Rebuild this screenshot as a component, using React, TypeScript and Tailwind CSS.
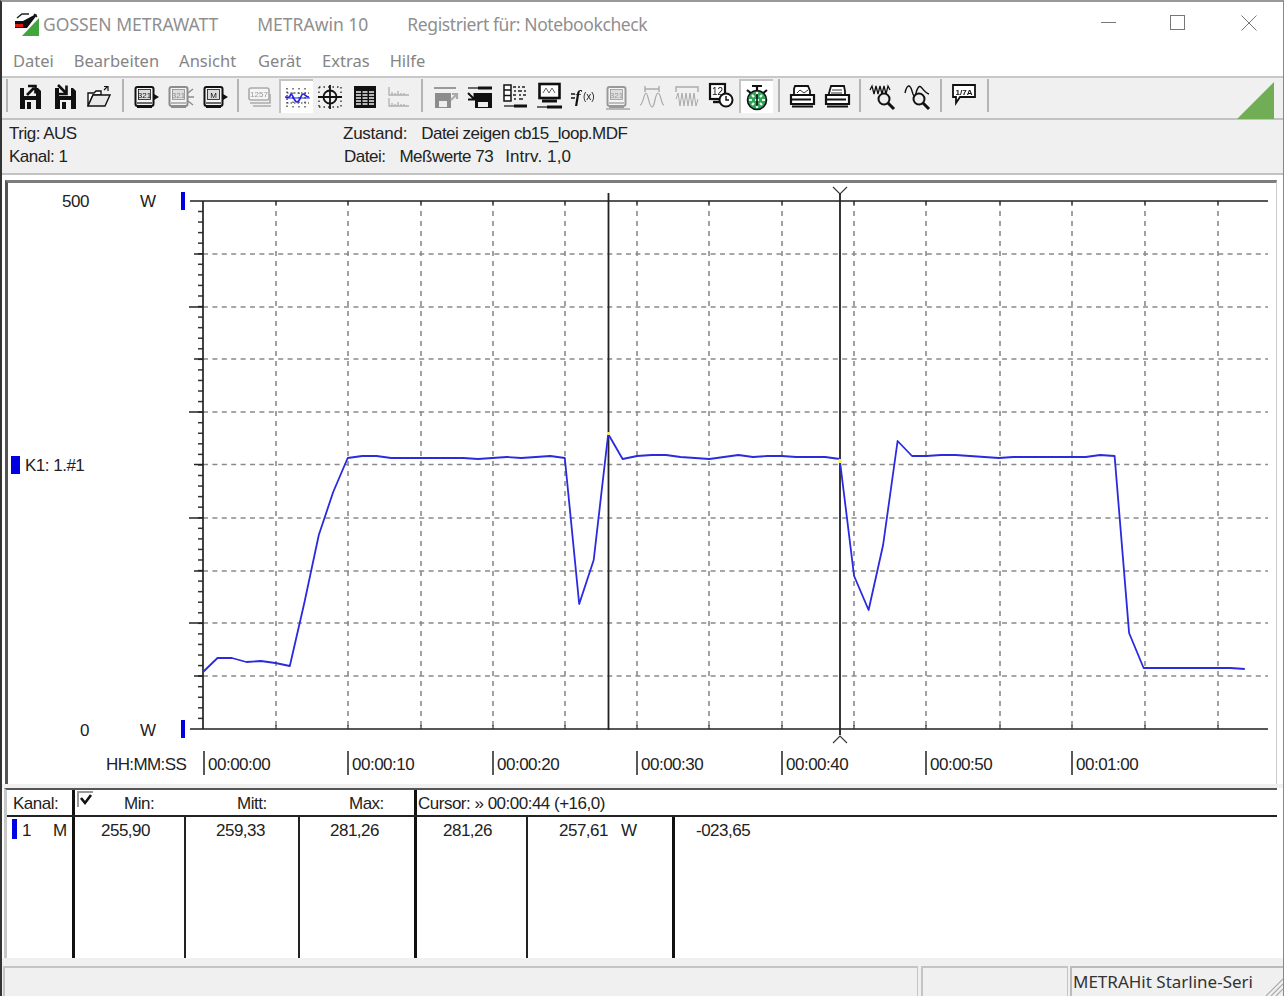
import React from "react"

const ui = "font-['Noto_Sans',sans-serif]"
const old = "font-['Liberation_Sans',sans-serif]"

const samples = [
  672, 658, 658, 662, 661, 663, 666, 603, 535, 492, 458, 456, 456, 458, 458, 458, 458, 458, 458, 459, 458, 457, 458, 457, 456, 458,
  604, 560, 434, 459, 456, 455, 455, 457, 458, 459, 457, 455, 457, 456, 456, 457, 457, 457, 459, 576, 610, 545, 441, 456, 456, 455,
  455, 456, 457, 458, 457, 457, 457, 457, 457, 457, 455, 456, 633, 668, 668, 668, 668, 668, 668, 668, 669,
]

const curve = samples.map((y, i) => `${(203 + 14.47 * i).toFixed(1)},${y}`).join(" ")
const vGrid = [276, 348, 421, 493, 565, 637, 709, 782, 854, 926, 1000, 1072, 1145, 1218]
const hGrid = [254, 307, 359, 412, 464.5, 518, 571, 623, 676]
const timeLabels = [
  [204, "00:00:00"],
  [348, "00:00:10"],
  [493, "00:00:20"],
  [637, "00:00:30"],
  [782, "00:00:40"],
  [926, "00:00:50"],
  [1072, "00:01:00"],
] as const
const yTicks = Array.from({ length: 50 }, (_, i) => 211.5 + i * 10.56).filter((y) => y < 728)

function Sep() {
  return (
    <div className="w-[12.2px] h-[33px] flex justify-center shrink-0">
      <div className="w-[2px] h-full bg-[#b4b4b4]" />
    </div>
  )
}

function Btn({ children, active }: { children: React.ReactNode; active?: boolean }) {
  return (
    <div
      className={
        "w-[34.45px] h-[34px] flex items-center justify-center shrink-0 " +
        (active ? "bg-white border-t-2 border-l-2 border-[#c4c4c4]" : "")
      }
    >
      <svg width="30" height="30" viewBox="0 0 30 30" className="blur-[0.4px]">
        {children}
      </svg>
    </div>
  )
}

const Floppy = ({ c = "#111" }: { c?: string }) => (
  <>
    <path d="M5 7h18l3 3v18H5z" fill={c} />
    <rect x="9" y="7" width="12" height="8" fill="#f0f0f0" />
    <rect x="10" y="19" width="11" height="9" fill="#f0f0f0" />
    <rect x="12" y="21" width="4" height="7" fill={c} />
  </>
)

const Meter = ({ label, c = "#111" }: { label: string; c?: string }) => (
  <>
    <rect x="4.5" y="6" width="18" height="19" rx="2" fill="#f4f4f4" stroke={c} strokeWidth="2" />
    <rect x="7.5" y="8.5" width="12" height="10" fill="#ddd" stroke={c} strokeWidth="0.8" />
    <text x="13.5" y="16.5" textAnchor="middle" fontSize="8" fill={c} className={old}>
      {label}
    </text>
    <path d="M6 22h15" stroke={c} strokeWidth="1.2" />
    <path d="M6 26h15" stroke={c} strokeWidth="2" />
  </>
)

function Toolbar() {
  return (
    <div className="h-[42px] bg-[#f0f0f0] border-b-2 border-[#c2c2c2] flex items-start pt-[1px] ml-[-1px] relative shrink-0">
      <Sep />
      <Btn>
        <Floppy />
        <path d="M12 14l7-7M13 5h7.5v7.5" stroke="#111" strokeWidth="2.6" fill="none" />
      </Btn>
      <Btn>
        <Floppy />
        <path d="M8 4l8 8M16.5 4.5V13H8" stroke="#111" strokeWidth="2.6" fill="none" />
      </Btn>
      <Btn>
        <path d="M4 12h6l2-2h5v4H9l-5 11z" fill="#fff" stroke="#111" strokeWidth="1.4" />
        <path d="M4 25l5-11h17l-5 11z" fill="#e8e8e8" stroke="#111" strokeWidth="1.4" />
        <path d="M20 9l3-3M20 5.5h4V10" stroke="#111" strokeWidth="1.2" fill="none" />
      </Btn>
      <Sep />
      <Btn>
        <Meter label="321" />
        <path d="M23 13v6l5-3z" fill="#111" />
      </Btn>
      <Btn>
        <Meter label="321" c="#8c8c8c" />
        <path d="M23 12l5-4M23 16h6M23 20l5 4" stroke="#8c8c8c" strokeWidth="1.4" fill="none" />
      </Btn>
      <Btn>
        <Meter label="M" />
        <path d="M23 13v6l5-3z" fill="#111" />
      </Btn>
      <Sep />
      <Btn>
        <rect x="3" y="7" width="20" height="12" rx="2" fill="#f5f5f5" stroke="#aaa" strokeWidth="1.6" />
        <text x="13" y="16" textAnchor="middle" fontSize="8" fill="#999" className={old}>
          1257
        </text>
        <path d="M4 22h20v-9M7 25h18" stroke="#aaa" strokeWidth="1.6" fill="none" />
      </Btn>
      <Btn active>
        <path d="M5 6v20M5 21h22M5 11h22" stroke="#222" strokeWidth="1.2" strokeDasharray="1.5 2" />
        <path d="M11 6v20M17 6v20M23 6v20" stroke="#333" strokeWidth="1.2" strokeDasharray="1.5 3" />
        <path d="M3 15c3 0 4 2 6-3 2 0 3 8 6 8s4-8 6-8 3 3 6 3" stroke="#2222dd" strokeWidth="1.7" fill="none" />
        <path d="M4 16h24" stroke="#2222dd" strokeWidth="1" />
      </Btn>
      <Btn>
        <path d="M4 6h22M4 26h22M4 6v20M26 6v20" stroke="#333" strokeWidth="1.4" strokeDasharray="1.5 3" fill="none" />
        <circle cx="15" cy="16" r="6.5" fill="none" stroke="#111" strokeWidth="1.8" />
        <path d="M15 4v24M3 16h24" stroke="#111" strokeWidth="1.8" />
      </Btn>
      <Btn>
        <rect x="4" y="5" width="22" height="22" fill="#111" />
        <path
          d="M6 11h5M12.5 11h5M19 11h5M6 14h5M12.5 14h5M19 14h5M6 17h5M12.5 17h5M19 17h5M6 20h5M12.5 20h5M19 20h5M6 23h5M12.5 23h5M19 23h5"
          stroke="#eee"
          strokeWidth="1.6"
        />
      </Btn>
      <Btn>
        <path
          d="M5 6v8h20M5 17v8h20M8 14v-3M11 14v-2M14 14v-4M17 14v-2M20 14v-2M8 25v-3M11 25v-2M14 25v-4M17 25v-2M20 25v-2"
          stroke="#b0b0b0"
          strokeWidth="1.3"
          fill="none"
        />
      </Btn>
      <Sep />
      <Btn>
        <path d="M3 7h22" stroke="#999" strokeWidth="2" />
        <path d="M4 12h16v15H4z" fill="#8c8c8c" />
        <rect x="8" y="20" width="8" height="6" fill="#eee" />
        <path d="M20 19l6-6M21 13h5v5" stroke="#aaa" strokeWidth="2.2" fill="none" />
      </Btn>
      <Btn>
        <path d="M3 7h11" stroke="#111" strokeWidth="1.2" />
        <path d="M13 7h14" stroke="#111" strokeWidth="3" />
        <path d="M10 12h17v15H10z" fill="#111" />
        <rect x="13" y="21" width="10" height="5" fill="#eee" />
        <path d="M3 12l6 6M9.5 12v6.5H3" stroke="#111" strokeWidth="2" fill="none" />
      </Btn>
      <Btn>
        <path d="M4 4h7v16H4zM4 9h7M4 14.5h7" fill="#fff" stroke="#111" strokeWidth="1.5" />
        <path d="M13 6h3M18 6h2M22 6h3M14 10h2M18 10h4M24 10h2M13 14h3M19 14h2M23 14h3M14 18h2M19 18h4" stroke="#222" strokeWidth="1.7" />
        <path d="M4 25h10" stroke="#111" strokeWidth="1.2" />
        <path d="M14 25h13" stroke="#111" strokeWidth="3" />
      </Btn>
      <Btn>
        <rect x="5.5" y="3" width="20" height="14" fill="#fff" stroke="#111" strokeWidth="2.6" />
        <path d="M9 12l3-5 3 5 3-5 3 5" stroke="#666" fill="none" />
        <path d="M8 20h15" stroke="#111" strokeWidth="3" />
        <path d="M3 26h11" stroke="#111" strokeWidth="1.2" />
        <path d="M13 26h15" stroke="#111" strokeWidth="3" />
      </Btn>
      <Btn>
        <path d="M2 13h4M2 17h4" stroke="#111" strokeWidth="1.4" />
        <text x="6" y="21" fontSize="17" fontWeight="700" fontStyle="italic" fill="#111" className="font-['Liberation_Serif',serif]">
          f
        </text>
        <text x="14" y="19" fontSize="10" fill="#222" className={old}>
          (x)
        </text>
      </Btn>
      <Btn>
        <Meter label="321" c="#999" />
        <path d="M3 28h24" stroke="#aaa" strokeWidth="1.6" />
      </Btn>
      <Btn>
        <path d="M8 5v6M8 8h14M22 5v6" stroke="#aaa" strokeWidth="1.4" fill="none" />
        <path d="M3 24c3 0 4-12 6-12s3 14 6 14 3-14 6-14 3 12 6 12" stroke="#aaa" strokeWidth="1.2" fill="none" />
      </Btn>
      <Btn>
        <path d="M4 11V6h22v5" stroke="#aaa" strokeWidth="1.4" fill="none" />
        <path d="M4 18l2-6 2 13 2-13 2 13 2-13 2 13 2-13 2 13 2-13 2 13 2-7" stroke="#aaa" strokeWidth="1" fill="none" />
      </Btn>
      <Btn>
        <rect x="4" y="3" width="15" height="15" fill="#fff" stroke="#111" strokeWidth="2.2" />
        <text x="11.5" y="14" textAnchor="middle" fontSize="10" fill="#111" className={old}>
          12
        </text>
        <path d="M7 21h7" stroke="#111" strokeWidth="2.4" />
        <circle cx="20" cy="19" r="6.5" fill="#fff" stroke="#111" strokeWidth="2" />
        <path d="M20 15v4h3" stroke="#111" strokeWidth="1.4" fill="none" />
      </Btn>
      <Btn active>
        <path d="M10 4h10M15 4v7M5 8l5 4M25 8l-5 4" stroke="#111" strokeWidth="2.2" />
        <circle cx="15" cy="18" r="9.5" fill="#2fa35a" stroke="#111" strokeWidth="1.6" />
        <path
          d="M15 10v3M15 23v3M7 18h3M20 18h3M10 13l2 2M20 13l-2 2M10 23l2-2M20 23l-2-2M13 18h4"
          stroke="#eaffea"
          strokeWidth="2.2"
        />
        <path d="M15 12v12" stroke="#111" strokeWidth="1.6" />
      </Btn>
      <Sep />
      <Btn>
        <path d="M8 5h13l2 5v6H7V8z" fill="#fff" stroke="#111" strokeWidth="1.8" />
        <path d="M10 12l3-3 4 3 4-3" stroke="#333" fill="none" />
        <path d="M4 14h23v9H4z" fill="#fff" stroke="#111" strokeWidth="2.2" />
        <path d="M5 18.5h19M5 25.5h21" stroke="#111" strokeWidth="2.2" />
      </Btn>
      <Btn>
        <path d="M9 5h13l1 5v6H6z" fill="#fff" stroke="#111" strokeWidth="1.8" />
        <path d="M10 9h10M9 12h11" stroke="#333" />
        <path d="M4 14h23v9H4z" fill="#fff" stroke="#111" strokeWidth="2.2" />
        <path d="M5 18.5h19M5 25.5h21" stroke="#111" strokeWidth="2.2" />
      </Btn>
      <Sep />
      <Btn>
        <path d="M2 9l2-4 2 8 2-8 2 8 2-8 2 8 2-8 2 8 2-8 2 4" stroke="#111" strokeWidth="1.3" fill="none" />
        <circle cx="16" cy="18" r="5.5" fill="#eee" stroke="#111" strokeWidth="2" />
        <path d="M20 22l6 6" stroke="#111" strokeWidth="3" />
      </Btn>
      <Btn>
        <path d="M2 12c2-9 5-9 7-2s3 6 4 2 3-8 5-6 4 6 8 7" stroke="#111" strokeWidth="1.4" fill="none" />
        <circle cx="16" cy="18" r="5.5" fill="#eee" stroke="#111" strokeWidth="2" />
        <path d="M20 22l6 6" stroke="#111" strokeWidth="3" />
      </Btn>
      <Sep />
      <Btn>
        <path d="M4 4h22v12H11l-4 6v-6H4z" fill="#fff" stroke="#111" strokeWidth="1.8" />
        <text x="15" y="13.5" textAnchor="middle" fontSize="8" fontWeight="700" fill="#111" className={old}>
          1/7A
        </text>
      </Btn>
      <Sep />
      <svg width="37" height="37" viewBox="0 0 37 37" className="absolute right-[9px] top-[4px]">
        <path d="M0 37L37 0v37z" fill="#71ad55" />
      </svg>
    </div>
  )
}

function Chart() {
  return (
    <svg width="1268" height="601" viewBox="8 183 1268 601" className={old + " block"}>
      {vGrid.map((x) => (
        <path key={x} d={`M${x} 201V729`} stroke="#8a8a8a" strokeWidth="1.6" strokeDasharray="5 5" />
      ))}
      {hGrid.map((y) => (
        <path key={y} d={`M203 ${y}H1268`} stroke="#8a8a8a" strokeWidth="1.6" strokeDasharray="5 4.4" />
      ))}
      {vGrid.map((x) => (
        <path key={x} d={`M${x} 201v4M${x} 729v-4`} stroke="#333" strokeWidth="1.2" />
      ))}
      {yTicks.map((y) => (
        <path key={y} d={`M198 ${y}h5`} stroke="#333" strokeWidth="1.5" />
      ))}
      {[254, 359, 464.5, 571, 676].map((y) => (
        <path key={y} d={`M194 ${y}h9`} stroke="#222" strokeWidth="1.5" />
      ))}
      {[307, 412, 518, 623].map((y) => (
        <path key={y} d={`M189 ${y}h14`} stroke="#222" strokeWidth="1.5" />
      ))}
      <path d="M190 201H1268M190 729H1268M203 201V729" stroke="#222" strokeWidth="1.7" fill="none" />
      <path d="M608.5 193V730M840 193V735" stroke="#222" strokeWidth="1.8" fill="none" />
      <path d="M833 187l7 7 7-7M833 743l7-7 7 7" stroke="#333" strokeWidth="1.1" fill="none" />
      <polyline points={curve} fill="none" stroke="#2a2ae0" strokeWidth="1.8" strokeLinejoin="round" />
      <rect x="607" y="432" width="3" height="3" fill="#f5ee50" />
      <rect x="838.5" y="459" width="3" height="4" fill="#f5ee50" />

      <rect x="181" y="192" width="4" height="18" fill="#0000e0" />
      <rect x="181" y="720" width="4" height="18" fill="#0000e0" />
      <rect x="11" y="456" width="9" height="18" fill="#0000e0" />

      <g fontSize="17" fill="#222" letterSpacing="-0.5">
        <text x="62" y="207">500</text>
        <text x="140" y="207">W</text>
        <text x="80" y="736">0</text>
        <text x="140" y="736">W</text>
        <text x="25" y="471">K1: 1.#1</text>
        <text x="106" y="770" letterSpacing="-0.6">HH:MM:SS</text>
        {timeLabels.map(([x, label]) => (
          <g key={label}>
            <path d={`M${x} 751v24`} stroke="#222" strokeWidth="1.5" />
            <text x={x + 4} y="770">{label}</text>
          </g>
        ))}
      </g>
    </svg>
  )
}

function Table() {
  return (
    <div className={"ml-[2px] mr-[6px] h-[170px] flex flex-col bg-white border-t-2 border-t-[#555] border-l-[3px] border-l-[#c8c8c8] text-[17px] tracking-[-0.5px] text-[#222] shrink-0 " + old}>
      <div className="h-[27px] flex border-b-2 border-[#222]">
        <div className="w-[65px] pl-[6px] leading-[27px]">Kanal:</div>
        <div className="w-[342px] border-l-[3px] border-[#111] flex relative">
          <div className="absolute left-[2px] top-[1px] w-[16px] h-[16px] border-t-2 border-l-2 border-[#999] flex items-center justify-center">
            <svg width="14" height="14" viewBox="0 0 14 14">
              <path d="M2 5l4 5 6-8" fill="none" stroke="#111" strokeWidth="2.6" />
            </svg>
          </div>
          <div className="w-[109px] pl-[49px] leading-[27px]">Min:</div>
          <div className="w-[114px] pl-[53px] leading-[27px]">Mitt:</div>
          <div className="w-[116px] pl-[51px] leading-[27px]">Max:</div>
        </div>
        <div className="flex-1 border-l-[3px] border-[#111] pl-[1px] leading-[27px]">Cursor: » 00:00:44 (+16,0)</div>
      </div>
      <div className="flex-1 flex">
        <div className="w-[65px] flex items-start pt-[2px] relative">
          <div className="w-[5px] h-[20px] ml-[5px] bg-[#0000e0]" />
          <span className="ml-[5px] leading-[24px]">1</span>
          <span className="absolute left-[46px] top-[2px] leading-[24px]">M</span>
        </div>
        <div className="w-[112px] border-l-[3px] border-[#111] pl-[26px] pt-[2px] leading-[24px]">255,90</div>
        <div className="w-[114px] border-l-2 border-[#222] pl-[30px] pt-[2px] leading-[24px]">259,33</div>
        <div className="w-[116px] border-l-2 border-[#222] pl-[30px] pt-[2px] leading-[24px]">281,26</div>
        <div className="w-[112px] border-l-[3px] border-[#111] pl-[26px] pt-[2px] leading-[24px]">281,26</div>
        <div className="w-[146px] border-l-2 border-[#222] pl-[31px] pt-[2px] leading-[24px]">
          257,61<span className="ml-[13px]">W</span>
        </div>
        <div className="flex-1 border-l-[3px] border-[#111] pl-[21px] pt-[2px] leading-[24px]">-023,65</div>
      </div>
    </div>
  )
}

export default function App() {
  return (
    <div className={"w-[1284px] h-[996px] overflow-hidden flex flex-col bg-white border-l-2 border-l-[#333] border-r border-r-[#888] border-t-2 border-t-[#999] " + ui}>
      <div className="h-[44px] flex items-center text-[17.5px] text-[#8f8f8f] shrink-0">
        <svg width="28" height="28" viewBox="0 0 28 28" className="ml-[11px] mr-[2px] mt-[-3px]">
          <path d="M4 9l5-4h7M21 5l3 3" stroke="#222" strokeWidth="1.5" fill="none" />
          <path d="M2 12h8l13-7 1 1-10 13H2z" fill="#111" />
          <rect x="2" y="15" width="8" height="3" fill="#e01818" />
          <path d="M9 27L26 9v18z" fill="#42a63c" />
        </svg>
        <span>GOSSEN METRAWATT</span>
        <span className="ml-[39px]">METRAwin 10</span>
        <span className="ml-[39px] tracking-[-0.4px]">Registriert für: Notebookcheck</span>
        <div className="ml-auto flex items-center mr-[26px] mt-[-3px]">
          <div className="w-[15px] h-px bg-[#777] mr-[54px]" />
          <div className="w-[15px] h-[15px] border border-[#777] mr-[56px]" />
          <svg width="16" height="16" viewBox="0 0 16 16">
            <path d="M0.5 0.5l15 15M15.5 0.5l-15 15" stroke="#777" strokeWidth="1" />
          </svg>
        </div>
      </div>
      <div className="h-[32px] flex items-center gap-[21px] pl-[11px] text-[16.5px] text-[#858585] shrink-0 border-b-2 border-[#c8c8c8]">
        <span>Datei</span>
        <span className="ml-[-1px]">Bearbeiten</span>
        <span className="ml-[-1px]">Ansicht</span>
        <span className="ml-[1px]">Gerät</span>
        <span>Extras</span>
        <span className="ml-[-1px]">Hilfe</span>
      </div>
      <Toolbar />
      <div className={"h-[55px] bg-[#f0f0f0] border-b-2 border-[#c2c2c2] flex text-[17px] tracking-[-0.5px] text-[#222] pt-[2px] shrink-0 " + old}>
        <div className="w-[341px] pl-[7px] leading-[23px]">
          <div>Trig: AUS</div>
          <div>Kanal: 1</div>
        </div>
        <div className="leading-[23px]">
          <div>
            <span className="tracking-[-0.25px]">Zustand:</span>
            <span className="ml-[14px]">Datei zeigen cb15_loop.MDF</span>
          </div>
          <div>
            <span className="ml-[1px]">Datei:</span>
            <span className="ml-[14px]">Meßwerte 73</span>
            <span className="ml-[12px] tracking-[0.1px]">Intrv. 1,0</span>
          </div>
        </div>
      </div>
      <div className="h-[5px] bg-white shrink-0" />
      <div className="ml-[3px] w-[1272px] border-t-[3px] border-t-[#7d7d7d] border-l-[3px] border-l-[#555] border-r border-r-[#ccc] bg-white shrink-0">
        <Chart />
      </div>
      <div className="h-[4px] bg-[#f0f0f0] shrink-0" />
      <Table />
      <div className="flex-1 bg-[#f0f0f0] pt-[8px] flex items-stretch text-[17px] text-[#333]">
        <div className="w-[915px] ml-[1px] border-t-2 border-l-2 border-r border-[#c4c4c4]" />
        <div className="w-[147px] ml-[3px] border-t-2 border-l-2 border-r border-[#c4c4c4]" />
        <div className="flex-1 ml-[2px] border-t-2 border-l-2 border-[#bbb] pl-[1px] leading-[27px] relative">
          METRAHit Starline-Seri
          <svg width="18" height="18" viewBox="0 0 18 18" className="absolute right-0 bottom-0">
            <path d="M18 1L1 18M18 6L6 18M18 11L11 18" stroke="#aaa" strokeWidth="1.2" />
          </svg>
        </div>
      </div>
    </div>
  )
}
